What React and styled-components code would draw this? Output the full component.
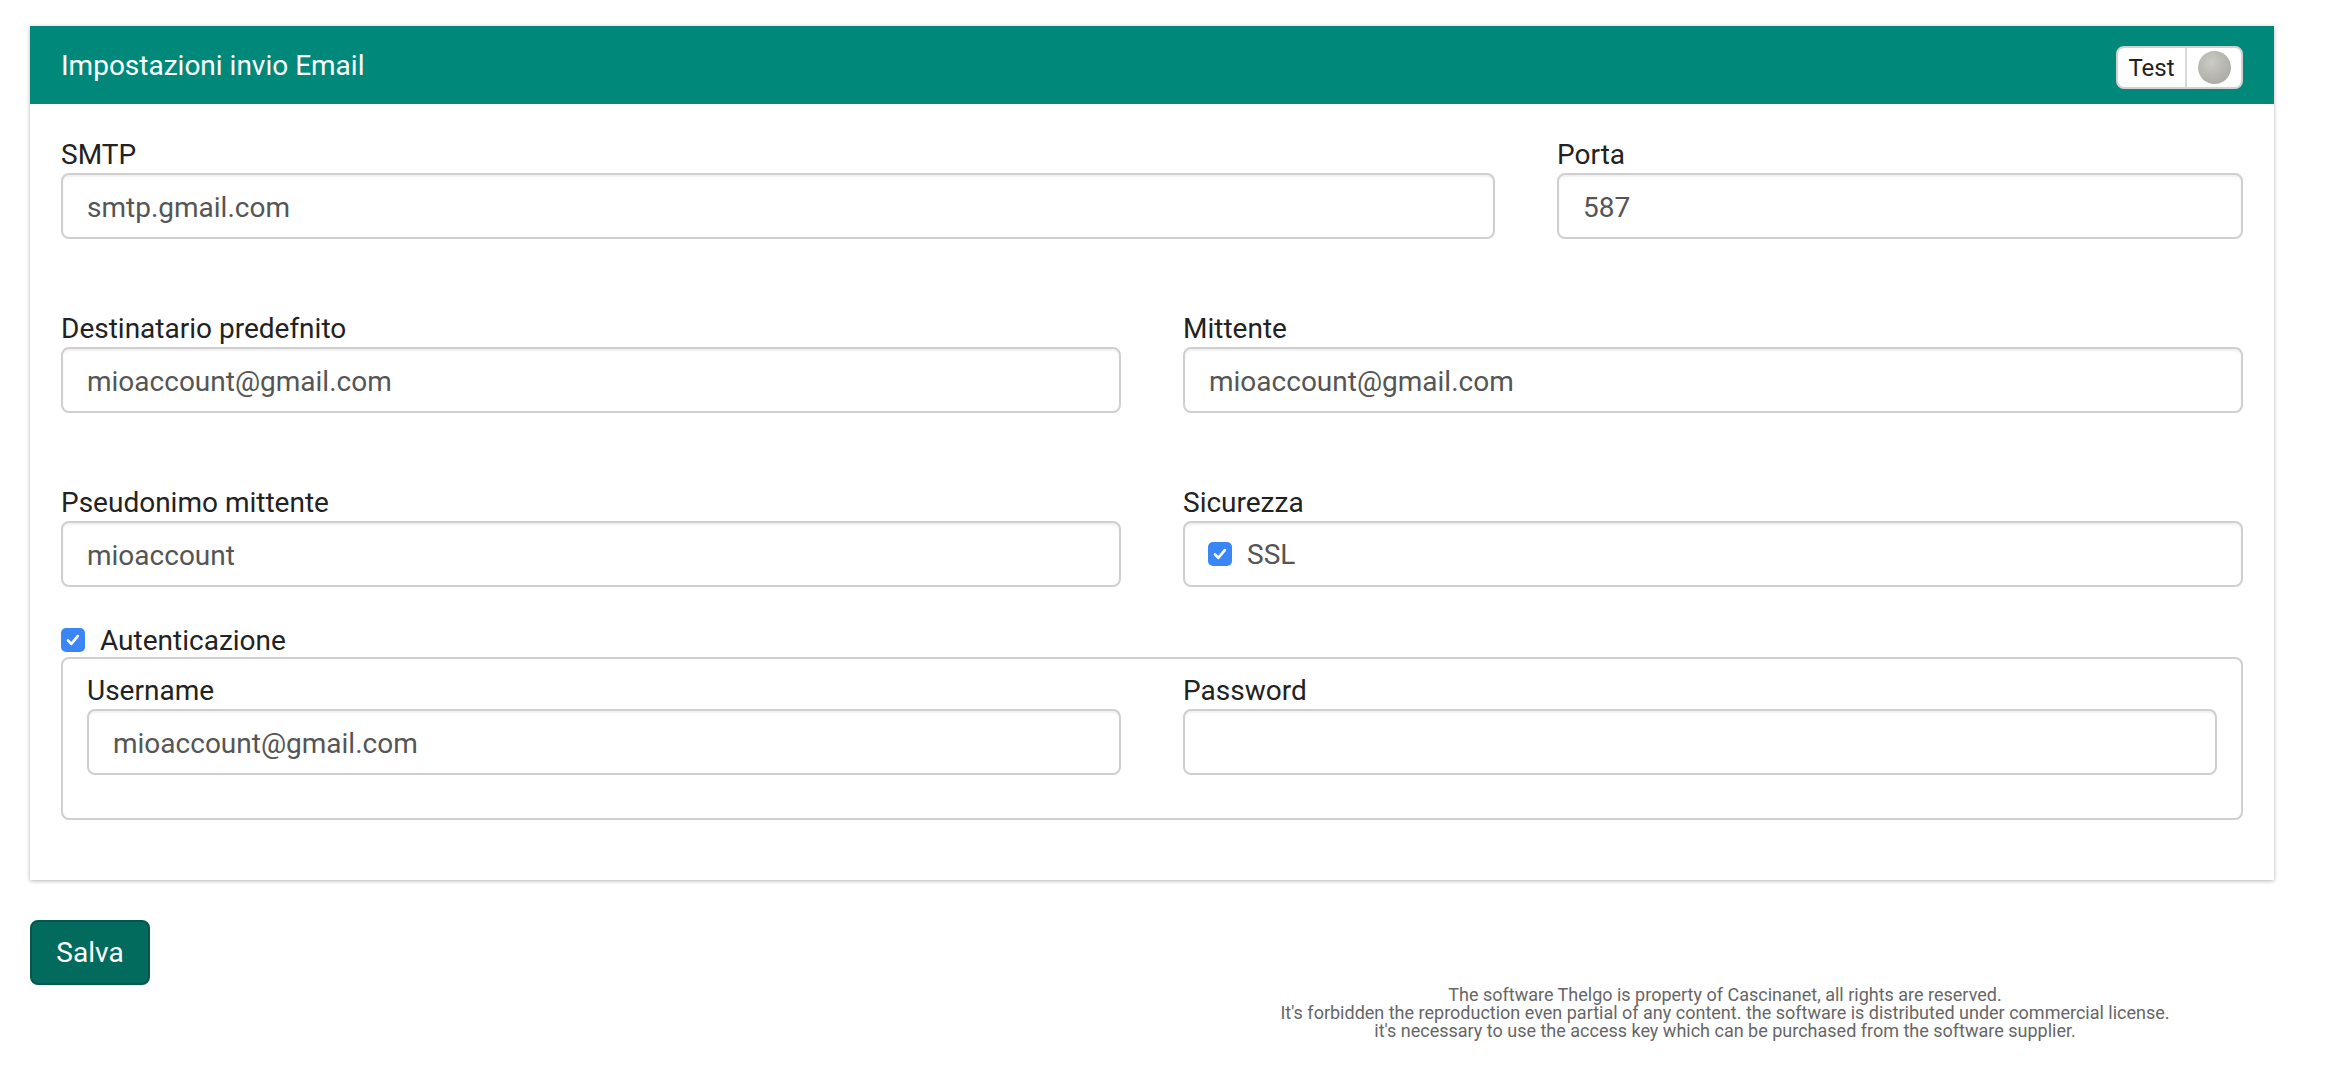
import React from "react";
import styled, { createGlobalStyle, css } from "styled-components";

const GlobalStyle = createGlobalStyle`
  * {
    box-sizing: border-box;
  }
  html,
  body {
    margin: 0;
    background: #fff;
  }
  body {
    font-family: Roboto, "Liberation Sans", Arial, sans-serif;
  }
`;

function CheckMark() {
  return (
    <Check>
      <svg width="18" height="18" viewBox="0 0 16 16" fill="none">
        <path
          d="M3.5 8.3l3 3.2 5.8-7"
          stroke="#fff"
          strokeWidth="2.3"
          strokeLinecap="round"
          strokeLinejoin="round"
        />
      </svg>
    </Check>
  );
}

function Field({ label, value, span }) {
  return (
    <Col $span={span}>
      <Label>{label}</Label>
      <Input type="text" defaultValue={value} readOnly />
    </Col>
  );
}

function App() {
  return (
    <Page>
      <GlobalStyle />
      <Card>
        <CardHeader>
          <Title>Impostazioni invio Email</Title>
          <TestToggle>
            <ToggleText>Test</ToggleText>
            <ToggleKnob>
              <span className="dot" />
            </ToggleKnob>
          </TestToggle>
        </CardHeader>
        <CardBody>
          <Row $mb={73}>
            <Field span={8} label="SMTP" value="smtp.gmail.com" />
            <Field span={4} label="Porta" value="587" />
          </Row>
          <Row $mb={73}>
            <Field span={6} label="Destinatario predefnito" value="mioaccount@gmail.com" />
            <Field span={6} label="Mittente" value="mioaccount@gmail.com" />
          </Row>
          <Row $mb={36}>
            <Field span={6} label="Pseudonimo mittente" value="mioaccount" />
            <Col $span={6}>
              <Label>Sicurezza</Label>
              <OptionBox>
                <CheckMark />
                <span>SSL</span>
              </OptionBox>
            </Col>
          </Row>
          <AuthHeader>
            <CheckMark />
            <span>Autenticazione</span>
          </AuthHeader>
          <AuthBox>
            <Row $mb={0}>
              <Field span={6} label="Username" value="mioaccount@gmail.com" />
              <Field span={6} label="Password" value="" />
            </Row>
          </AuthBox>
        </CardBody>
      </Card>
      <SaveButton>Salva</SaveButton>
      <FooterNote>
        The software Thelgo is property of Cascinanet, all rights are reserved.
        <br />
        It's forbidden the reproduction even partial of any content. the software is distributed under commercial license.
        <br />
        it's necessary to use the access key which can be purchased from the software supplier.
      </FooterNote>
    </Page>
  );
}

const Page = styled.div`
  padding: 26px 56px 40px 30px;
`;

const Card = styled.section`
  background: #fff;
  box-shadow: 0 1px 4px rgba(0, 0, 0, 0.3);
`;

const CardHeader = styled.header`
  display: flex;
  align-items: center;
  justify-content: space-between;
  height: 78px;
  padding: 0 31px;
  background: #00897b;
`;

const Title = styled.h2`
  margin: 0;
  color: #fff;
  font-size: 28px;
  font-weight: 400;
`;

const TestToggle = styled.div`
  display: flex;
  height: 43px;
  margin-top: 5px;
  background: #fff;
  border: 2px solid #d2d2d2;
  border-radius: 8px;
  overflow: hidden;
`;

const ToggleText = styled.div`
  display: flex;
  align-items: center;
  justify-content: center;
  width: 69px;
  border-right: 2px solid #d8d8d8;
  color: #222;
  font-size: 24px;
`;

const ToggleKnob = styled.div`
  display: flex;
  align-items: center;
  justify-content: center;
  width: 54px;
  .dot {
    width: 33px;
    height: 33px;
    border-radius: 50%;
    background: radial-gradient(circle at 40% 35%, #cbcbc5, #a2a29b);
  }
`;

const CardBody = styled.div`
  padding: 34px 31px 60px;
`;

const Row = styled.div`
  display: flex;
  margin: 0 -31px ${(p) => p.$mb}px;
`;

const Col = styled.div`
  flex: 0 0 ${(p) => (p.$span / 12) * 100}%;
  padding: 0 31px;
`;

const Label = styled.label`
  display: block;
  margin-bottom: 1px;
  color: #222;
  font-size: 28px;
  line-height: 34px;
`;

const boxLook = css`
  width: 100%;
  height: 66px;
  background: #fff;
  border: 2px solid #cfcfcf;
  border-radius: 8px;
  box-shadow: inset 0 2px 2px rgba(0, 0, 0, 0.06);
  color: #555;
  font-family: inherit;
  font-size: 28px;
`;

const Input = styled.input`
  ${boxLook};
  display: block;
  padding: 2px 24px 0;
  outline: none;
`;

const OptionBox = styled.div`
  ${boxLook};
  display: flex;
  align-items: center;
  gap: 15px;
  padding: 0 23px;
`;

const Check = styled.span`
  display: inline-flex;
  align-items: center;
  justify-content: center;
  width: 24px;
  height: 24px;
  border-radius: 5px;
  background: #3a86f6;
`;

const AuthHeader = styled.div`
  display: flex;
  align-items: center;
  gap: 15px;
  height: 34px;
  color: #222;
  font-size: 28px;
`;

const AuthBox = styled.div`
  padding: 15px 24px 43px;
  border: 2px solid #cfcfcf;
  border-radius: 8px;
`;

const SaveButton = styled.button`
  display: block;
  width: 120px;
  height: 65px;
  margin-top: 40px;
  background: #036b5d;
  border: 2px solid #02574b;
  border-radius: 8px;
  color: #fff;
  font-family: inherit;
  font-size: 28px;
  cursor: pointer;
`;

const FooterNote = styled.p`
  margin: 1px -24px 0 50%;
  color: #666;
  font-size: 18px;
  line-height: 18px;
  text-align: center;
`;

export default App;
